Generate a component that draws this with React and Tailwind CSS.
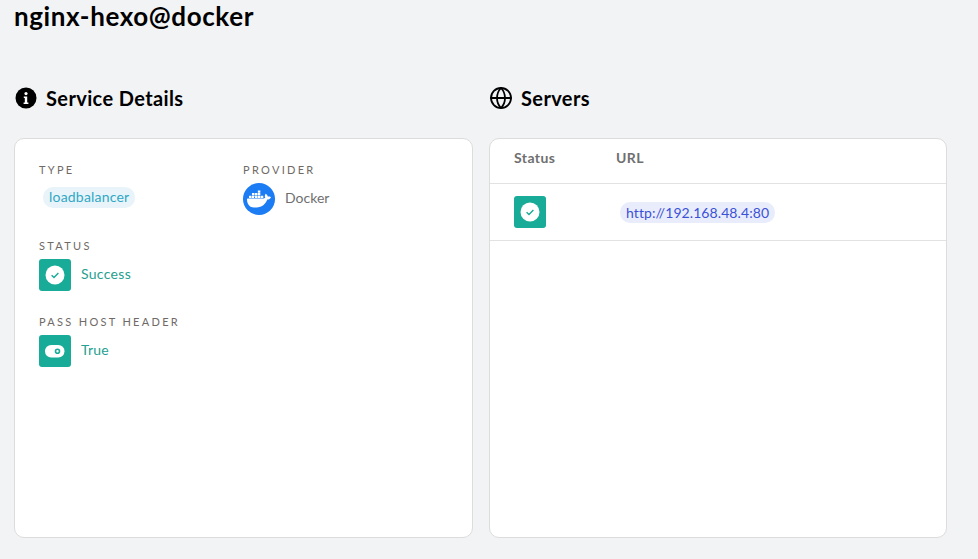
import { Globe } from 'lucide-react'
import { SiDocker } from 'react-icons/si'

const font = "font-['Lato','Noto_Sans',sans-serif]"

function InfoIcon() {
  return (
    <svg width="24" height="24" viewBox="0 0 24 24" className="shrink-0">
      <circle cx="12" cy="12" r="10.5" fill="#000" />
      <circle cx="12" cy="7.6" r="1.6" fill="#fff" />
      <path d="M9.8 10.4h3.4v6h1.2v1.6H9.6v-1.6h1.2v-4.4h-1z" fill="#fff" />
    </svg>
  )
}

function CheckBadge() {
  return (
    <div className="flex h-8 w-8 items-center justify-center rounded-[3px] bg-[#18ab97]">
      <svg width="20" height="20" viewBox="0 0 20 20">
        <circle cx="10" cy="10" r="9.5" fill="#fff" />
        <path d="M6.6 10.2l2.4 2.4 4.4-4.6" fill="none" stroke="#18ab97" strokeWidth="1.4" />
      </svg>
    </div>
  )
}

function ToggleBadge() {
  return (
    <div className="flex h-8 w-8 items-center justify-center rounded-[3px] bg-[#18ab97]">
      <svg width="20" height="14" viewBox="0 0 20 14">
        <rect x="0" y="1" width="19.5" height="12.5" rx="6.2" fill="#fff" />
        <circle cx="12.5" cy="7.2" r="2" fill="none" stroke="#18ab97" strokeWidth="1.6" />
      </svg>
    </div>
  )
}

function Label({ children }) {
  return <div className="text-[11px] leading-[14px] tracking-[2.3px] text-[#6f6a66]">{children}</div>
}

function SectionTitle({ icon, children }) {
  return (
    <div className="flex h-6 items-center gap-2 text-[20px] font-bold leading-6 tracking-[0.38px] text-black">
      {icon}
      <span>{children}</span>
    </div>
  )
}

export default function App() {
  return (
    <div className={`h-[559px] w-[978px] overflow-hidden bg-[#f2f3f5] pl-[14px] ${font}`}>
      <h1 className="h-[86px] text-[26px] font-bold leading-[32px] tracking-[0.6px] text-black">nginx-hexo@docker</h1>

      <div className="grid w-[933px] grid-cols-[459px_458px] gap-x-4">
        <SectionTitle icon={<InfoIcon />}>Service Details</SectionTitle>
        <SectionTitle icon={<Globe size={24} strokeWidth={1.8} color="#000" />}>Servers</SectionTitle>

        <div className="mt-[28px] h-[400px] rounded-[10px] border border-[#dcdcdc] bg-white pl-6 pt-6">
          <div className="grid grid-cols-[204px_1fr]">
            <div>
              <Label>TYPE</Label>
              <div className="mt-[10px] flex pl-1">
                <span className="h-[21px] rounded-[10px] bg-[#e8f4f9] px-[6px] text-[14px] leading-[20px] tracking-[0.2px] text-[#31a7c6]">
                  loadbalancer
                </span>
              </div>
            </div>
            <div>
              <Label>PROVIDER</Label>
              <div className="mt-[6px] flex items-center gap-[10px]">
                <div className="flex h-8 w-8 items-center justify-center rounded-full bg-[#1b7cf4]">
                  <SiDocker size={24} color="#fff" />
                </div>
                <span className="pb-[2px] text-[14px] leading-5 text-[#6f6f6f]">Docker</span>
              </div>
            </div>
          </div>

          <div className="mt-6">
            <Label>STATUS</Label>
            <div className="mt-[6px] flex items-center gap-[10px]">
              <CheckBadge />
              <span className="pb-[2px] text-[14px] leading-5 tracking-[0.3px] text-[#26a090]">Success</span>
            </div>
          </div>

          <div className="mt-6">
            <Label>PASS HOST HEADER</Label>
            <div className="mt-[6px] flex items-center gap-[10px]">
              <ToggleBadge />
              <span className="pb-[2px] text-[14px] leading-5 tracking-[0.2px] text-[#26a090]">True</span>
            </div>
          </div>
        </div>

        <div className="mt-[28px] h-[400px] rounded-[10px] border border-[#dcdcdc] bg-white">
          <div className="flex h-[45px] items-start border-b border-[#e2e2e2] pl-6 pt-[10px] text-[14px] font-bold leading-[17px] tracking-[0.4px] text-[#6f6f6f]">
            <span className="w-[102px]">Status</span>
            <span>URL</span>
          </div>
          <div className="flex h-[57px] items-center border-b border-[#e2e2e2] pl-6">
            <div className="w-[106px]">
              <CheckBadge />
            </div>
            <span className="h-[21px] rounded-[10px] bg-[#e9edfb] px-[6px] text-[14px] leading-[21px] tracking-[0.08px] text-[#3b51d6]">
              http://192.168.48.4:80
            </span>
          </div>
        </div>
      </div>
    </div>
  )
}
